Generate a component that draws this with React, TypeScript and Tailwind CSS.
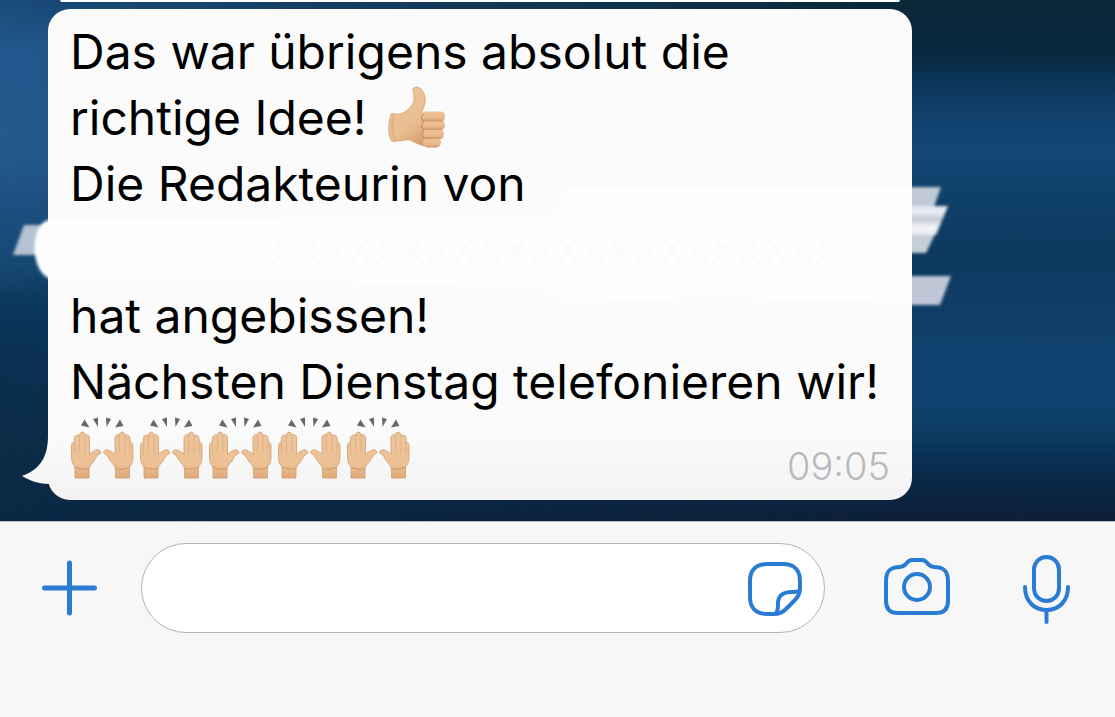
import type { ReactNode } from "react";

const cheers = [1, 2, 3, 4, 5];

function ThumbsUp() {
  return (
    <svg
      role="img"
      aria-label="Daumen hoch"
      viewBox="0 0 60 64"
      className="-mt-2 ml-2 inline-block h-16 w-15 align-middle"
    >
      <defs>
        <linearGradient id="thumb" x1="0" y1="0" x2="0.6" y2="1">
          <stop offset="0" stopColor="#edc698" />
          <stop offset="0.7" stopColor="#e9bd8f" />
          <stop offset="1" stopColor="#d99e70" />
        </linearGradient>
        <linearGradient id="finger" x1="0" y1="0" x2="0" y2="1">
          <stop offset="0" stopColor="#efc599" />
          <stop offset="0.7" stopColor="#e8b88a" />
          <stop offset="1" stopColor="#cf9063" />
        </linearGradient>
      </defs>
      <path
        d="M3 28 C7 27 10 29 14 27.500 C19 25 22 22 24 19 C27 14 26 10 25 5 C24 0 31 0 33 3 C36 7 38 11 37 17 C36 21 34 24 34 28 L42 28 L46 60 C40 61 35 60 30 58 C25 56 22 53 18 54 L6 55.500 C3 56 2 53 1.500 50 C0 43 1 34 3 28 Z"
        fill="url(#thumb)"
        stroke="#d5a376"
        strokeWidth="0.8"
      />
      <path d="M6 30 C3 38 4 48 7 54" fill="none" stroke="#d1a071" strokeWidth="2.500" opacity="0.4" />
      <g fill="url(#finger)">
        <rect x="35" y="51" width="18" height="10.500" rx="5" />
        <rect x="34" y="43" width="22" height="10" rx="4.500" />
        <rect x="34" y="34" width="23" height="10" rx="4.500" />
        <rect x="33" y="25.500" width="24" height="10" rx="4.500" />
      </g>
      <path d="M36 28 C32 31 33 35 36 36 C33 39 33 43 36 44 C34 47 34 51 37 53" fill="none" stroke="#b9794f" opacity="0.8" />
    </svg>
  );
}

function Hand() {
  return (
    <>
      <path
        d="M4 60 V49 C1 46 0.500 42 0.500 38 V28 C0.500 25 2 24 3 25 L3.500 20 C4 17 7 16 8.500 18 C8.500 13 13.500 13 14 17 C16 16 18.500 17 18.500 20 V36 L24 32.500 C27 30.500 31 33 29.500 35.500 C26 36.500 25 40 23 43 C21 46 18 48 18 51 V60 Z"
        fill="url(#skin)"
        stroke="#d19d6e"
        strokeWidth="0.8"
      />
      <path d="M3.500 25 V36 M8.500 18 V35 M14 17 V35" stroke="#dcae82" strokeWidth="0.8" fill="none" />
      <path d="M4 49 C8 51.500 14 52 18 50" stroke="#d39c6c" strokeWidth="1.200" fill="none" />
    </>
  );
}

function RaisedHands() {
  return (
    <svg role="img" aria-label="Erhobene Hände" viewBox="0 0 64 62" className="h-[62px] w-16">
      <defs>
        <linearGradient id="skin" x1="0" y1="0" x2="0" y2="1">
          <stop offset="0" stopColor="#edc39a" />
          <stop offset="0.7" stopColor="#ecc193" />
          <stop offset="1" stopColor="#dea877" />
        </linearGradient>
      </defs>
      <path
        d="M11 8.500 L14.500 2.500 L19.500 10.500 Z M23 2 L28 0.500 V10 Z M36 0.500 L41 2 L36.500 10 Z M50 2.500 L53.500 9 L45 10.500 Z"
        fill="#6a6866"
      />
      <g transform="translate(1 1)">
        <Hand />
      </g>
      <g transform="translate(63.500 1) scale(-1 1)">
        <Hand />
      </g>
    </svg>
  );
}

/* White marker strokes painted over the name in the message */
function Redaction() {
  return (
    <svg
      aria-hidden="true"
      viewBox="0 0 950 130"
      className="absolute top-[171px] -left-[38px] h-[130px] w-[950px] max-w-none"
    >
      <defs>
        <filter id="soft" x="-5%" y="-20%" width="110%" height="140%">
          <feGaussianBlur stdDeviation="1.500" />
        </filter>
        <linearGradient id="streaks" x1="0" y1="0" x2="0" y2="1">
          <stop offset="0" stopColor="#dde1ea" />
          <stop offset="0.2" stopColor="#eff0f7" />
          <stop offset="0.45" stopColor="#c5cad8" />
          <stop offset="0.75" stopColor="#f4f5f7" />
          <stop offset="1" stopColor="#e4e8ee" />
        </linearGradient>
        <clipPath id="inside">
          <rect width="902" height="130" />
        </clipPath>
        <clipPath id="outside">
          <path d="M0 0 H38 V130 H0 Z M902 0 H950 V130 H902 Z" />
        </clipPath>
      </defs>
      <g clipPath="url(#outside)">
        <g filter="url(#soft)">
          <path d="M14 45 H40 V75 H3 Z" fill="#b4c2d2" />
          <path d="M860 7 H931 L924 27 H860 Z" fill="#c0c9d6" />
          <path d="M860 54 H925 L916 73 H860 Z" fill="#c6ced6" />
          <path d="M860 26 H938 L926 55 H860 Z" fill="url(#streaks)" />
          <path d="M860 96 H941 L930 125 H860 Z" fill="#c0c6d6" />
        </g>
      </g>
      <g clipPath="url(#inside)">
        <path
          d="M562 7 H930 V124 L700 116 L550 124 L545 110 L250 98 L38 98 C20 88 20 46 38 40 L540 36 Z"
          fill="#fefefe"
          filter="url(#soft)"
        />
      </g>
    </svg>
  );
}

function Wallpaper() {
  return (
    <div aria-hidden="true" className="absolute inset-0">
      <div className="absolute inset-0 bg-[linear-gradient(to_bottom,#0b2838_0%,#08283f_10%,#0a3355_15%,#113f6b_21%,#144775_29%,#0e4069_38%,#0d3960_48%,#0f3c65_56%,#10406d_67%,#10426f_77%,#0c3c64_83%,#08294a_91%,#0e1f38_100%)]" />
      <div className="absolute inset-0 bg-[linear-gradient(to_bottom,#1a4a78_0%,#22598f_10%,#245a8c_29%,#1d4f80_40%,#164872_51%,#0b365c_59%,#0a2f50_70%,#0b2c47_85%,#0a2845_100%)] [mask-image:linear-gradient(to_right,black,transparent_80%)]" />
    </div>
  );
}

function ToolButton({ label, children }: { label: string; children: ReactNode }) {
  return (
    <button type="button" aria-label={label} className="shrink-0 text-[#2a7bd3]">
      {children}
    </button>
  );
}

export default function App() {
  return (
    <div className="flex min-h-screen flex-col bg-[#f7f7f7] font-['Inter',sans-serif]">
      <main className="relative overflow-hidden pb-[21px]">
        <Wallpaper />
        <div className="relative mr-[215px] ml-15 h-0.5 rounded-b-sm bg-white" />

        <article className="relative mt-[7px] ml-12 w-[864px] rounded-[22px] bg-[linear-gradient(to_bottom,#fbfbfc_0%,#fbfbfc_85%,#f3f3f4_100%)] px-[22px] pt-2.5 pb-[19px] text-5xl leading-[66px] text-black">
          <svg aria-hidden="true" viewBox="0 0 40 56" className="absolute bottom-2 -left-[26px] h-14 w-10">
            <defs>
              <linearGradient id="tail" gradientUnits="userSpaceOnUse" x1="0" y1="0" x2="0" y2="56">
                <stop offset="0" stopColor="#fafafb" />
                <stop offset="1" stopColor="#f4f4f5" />
              </linearGradient>
            </defs>
            <path d="M26 0 C26 22 17 34 0 40 C8 45 18 48 27 48 L32 40 L27 0 Z" fill="url(#tail)" />
          </svg>
          <Redaction />
          <div className="relative">
            <p>
              Das war übrigens absolut die
              <br />
              richtige Idee! <ThumbsUp />
            </p>
            <p>Die Redakteurin von</p>
            <p className="pl-[200px] text-[38px] leading-[66px] text-[#fbfbfb]">XXXXXXXXXXXXXXXXXXXXXX</p>
            <p>hat angebissen!</p>
            <p className="whitespace-nowrap">Nächsten Dienstag telefonieren wir!</p>
            <div className="flex h-[66px] items-center justify-between">
              <div className="flex gap-[5px]">
                {cheers.map((n) => (
                  <RaisedHands key={n} />
                ))}
              </div>
              <time className="self-end text-[38px] leading-[30px] font-light text-[#b9b9be]">09:05</time>
            </div>
          </div>
        </article>
      </main>

      <footer className="flex items-center border-t border-[#b4bcc6] pt-[21px] pr-[42px] pl-10">
        <ToolButton label="Anhängen">
          <svg viewBox="0 0 60 60" className="size-15" fill="none" stroke="currentColor" strokeWidth="5" strokeLinecap="round">
            <path d="M29.500 5 V55 M4.500 30 H54.500" />
          </svg>
        </ToolButton>

        <div className="relative ml-[41px] flex-1">
          <input
            type="text"
            aria-label="Nachricht"
            className="block h-[90px] w-full rounded-full border border-[#b4b4b6] bg-white pr-24 pl-10 text-4xl outline-none"
          />
          <button type="button" aria-label="Sticker" className="absolute top-[17px] right-[21px] text-[#2a7bd3]">
            <svg viewBox="0 0 58 58" className="size-[58px]" fill="none" stroke="currentColor" strokeWidth="4" strokeLinejoin="round">
              <path d="M21 4 H37 C48 4 54 10 54 21 V28 C54 33 53 36 49 40 L40 49 C36 53 33 54 28 54 H21 C10 54 4 48 4 37 V21 C4 10 10 4 21 4 Z" />
              <path d="M53 31 C51 32 49 32 46 32 C36 32 32 36 32 44 C32 48 32 51 30 53" />
            </svg>
          </button>
        </div>

        <div className="ml-[57px] flex items-center gap-[69px]">
          <ToolButton label="Kamera">
            <svg viewBox="0 0 70 60" className="h-15 w-[70px]" fill="none" stroke="currentColor" strokeWidth="4" strokeLinejoin="round">
              <path d="M18 9 C21 9 22 8 24 6 C26 3 27 2 30 2 H40 C43 2 44 3 46 6 C48 8 49 9 52 9 C62 9 66 13 66 23 V43 C66 51 62 55 54 55 H16 C8 55 4 51 4 43 V23 C4 13 8 9 18 9 Z" />
              <circle cx="35" cy="29" r="13" />
            </svg>
          </ToolButton>
          <ToolButton label="Sprachnachricht">
            <svg viewBox="0 0 52 72" className="h-18 w-[52px]" fill="none" stroke="currentColor" strokeWidth="4" strokeLinecap="round">
              <rect x="13" y="5" width="25" height="44" rx="12.500" />
              <path d="M4 35 C4 49 13 58 25.500 58 C38 58 47 49 47 35 M25.500 58 V70" />
            </svg>
          </ToolButton>
        </div>
      </footer>
    </div>
  );
}
